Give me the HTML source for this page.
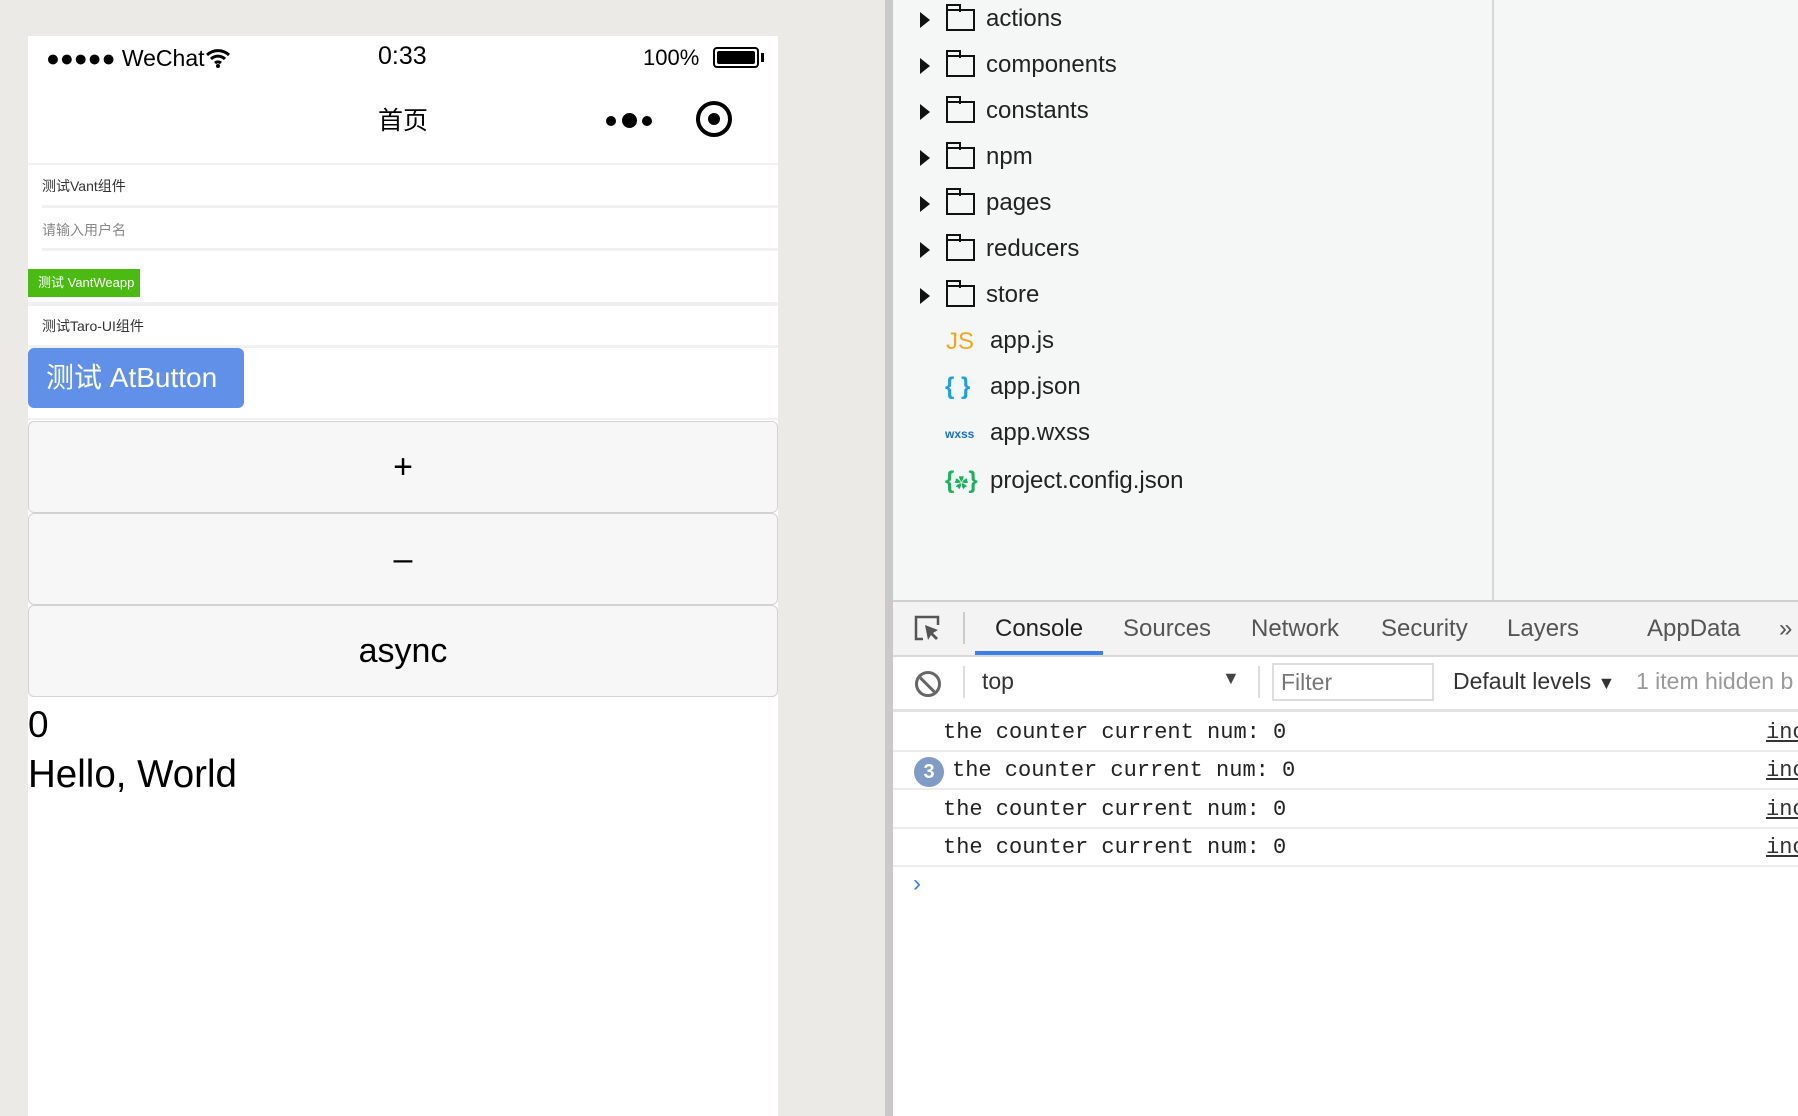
<!DOCTYPE html>
<html><head><meta charset="utf-8"><style>
*{margin:0;padding:0;box-sizing:border-box}
body{width:1798px;height:1116px;overflow:hidden;position:relative;background:#eceae6;font-family:"Liberation Sans","Noto Sans CJK SC",sans-serif;color:#000}
.a{position:absolute;white-space:nowrap}
.phone{position:absolute;left:28px;top:36px;width:750px;height:1080px;background:#fff}
.hr{position:absolute;left:0;right:0;height:3px;background:#f0f0f0}
.btn{position:absolute;left:0;width:750px;height:92px;background:#f7f7f7;border:1px solid #d2d2d2;border-radius:6px;text-align:center;line-height:90px;font-size:34px}
.right{position:absolute;left:893px;top:0;width:905px;height:1116px;background:#fff}
.tree{position:absolute;left:0;top:0;width:905px;height:600px;background:#f5f7f6}
.row{position:absolute;left:0;height:46px;font-size:24px;color:#222}
.tri{position:absolute;left:27px;top:6px;width:0;height:0;border-left:10px solid #111;border-top:8px solid transparent;border-bottom:8px solid transparent}
.fold{position:absolute;left:53px;top:3px;width:29px;height:22px;border:2px solid #111;border-top-width:2px}
.fold:before{content:"";position:absolute;left:-2px;top:-7px;width:11px;height:6px;border:2px solid #111;border-bottom:none}
.tab{position:absolute;top:615px;font-size:24px;color:#555}
.log{position:absolute;left:50px;font-family:"Liberation Mono",monospace;font-size:22px;color:#222}
.ln{position:absolute;left:0;right:0;height:2px;background:#ececec}
.inc{position:absolute;left:873px;font-family:"Liberation Mono",monospace;font-size:22px;text-decoration:underline;color:#333}
</style></head><body>
<div class="a" style="left:885px;top:0;width:8px;height:1116px;background:#c9c9c9"></div>
<div class="phone">
 <div class="a" style="left:18px;top:9px;font-size:23px">●●●●● WeChat<svg width="26" height="20" viewBox="0 0 26 20" style="vertical-align:-2px"><path d="M2 7a16 16 0 0 1 22 0M6 11a10 10 0 0 1 14 0M10 15a4.5 4.5 0 0 1 6 0" stroke="#000" stroke-width="3" fill="none"/><circle cx="13" cy="18" r="2" fill="#000"/></svg></div>
 <div class="a" style="left:350px;top:6px;font-size:25px">0:33</div>
 <div class="a" style="left:615px;top:9px;font-size:22px">100%</div>
 <div class="a" style="left:685px;top:11px;width:46px;height:21px;border:2px solid #000;border-radius:4px;padding:2px"><div style="width:100%;height:100%;background:#000;border-radius:2px"></div></div>
 <div class="a" style="left:733px;top:17px;width:3px;height:9px;background:#000"></div>
 <div class="a" style="left:350px;top:65px;font-size:25px">首页</div>
 <div class="a" style="left:578px;top:80px;width:10px;height:10px;border-radius:50%;background:#000"></div>
 <div class="a" style="left:594px;top:77px;width:15px;height:15px;border-radius:50%;background:#000"></div>
 <div class="a" style="left:614px;top:80px;width:10px;height:10px;border-radius:50%;background:#000"></div>
 <div class="a" style="left:668px;top:65px;width:36px;height:36px;border:4px solid #000;border-radius:50%"></div>
 <div class="a" style="left:680px;top:77px;width:12px;height:12px;background:#000;border-radius:50%"></div>
 <div class="hr" style="top:127px;height:2px"></div>
 <div class="a" style="left:14px;top:140px;font-size:14px;color:#333">测试Vant组件</div>
 <div class="hr" style="top:169px;left:14px"></div>
 <div class="a" style="left:14px;top:184px;font-size:14px;color:#888">请输入用户名</div>
 <div class="hr" style="top:212px;left:14px"></div>
 <div class="a" style="left:0;top:233px;width:112px;height:28px;background:#4bbb14;color:#fff;font-size:13px;line-height:28px;padding-left:10px">测试 VantWeapp</div>
 <div class="hr" style="top:266px;height:4px"></div>
 <div class="a" style="left:14px;top:280px;font-size:14px;color:#333">测试Taro-UI组件</div>
 <div class="hr" style="top:309px"></div>
 <div class="a" style="left:0;top:312px;width:216px;height:60px;background:#6190e8;border-radius:6px;color:#fff;font-size:28px;line-height:60px;padding-left:18px">测试 AtButton</div>
 <div class="hr" style="top:382px;height:2px"></div>
 <div class="btn" style="top:385px">+</div>
 <div class="btn" style="top:477px">–</div>
 <div class="btn" style="top:569px">async</div>
 <div class="a" style="left:0;top:668px;font-size:37px">0</div>
 <div class="a" style="left:0;top:717px;font-size:38.5px">Hello, World</div>
</div>
<div class="right">
 <div class="tree">
  <div class="a" style="left:599px;top:0;width:2px;height:600px;background:#d8d8d8"></div>
  <div class="row" style="top:6px"><div class="tri"></div><div class="fold"></div><span class="a" style="left:93px;top:-1px">actions</span></div>
  <div class="row" style="top:52px"><div class="tri"></div><div class="fold"></div><span class="a" style="left:93px;top:-1px">components</span></div>
  <div class="row" style="top:98px"><div class="tri"></div><div class="fold"></div><span class="a" style="left:93px;top:-1px">constants</span></div>
  <div class="row" style="top:144px"><div class="tri"></div><div class="fold"></div><span class="a" style="left:93px;top:-1px">npm</span></div>
  <div class="row" style="top:190px"><div class="tri"></div><div class="fold"></div><span class="a" style="left:93px;top:-1px">pages</span></div>
  <div class="row" style="top:236px"><div class="tri"></div><div class="fold"></div><span class="a" style="left:93px;top:-1px">reducers</span></div>
  <div class="row" style="top:282px"><div class="tri"></div><div class="fold"></div><span class="a" style="left:93px;top:-1px">store</span></div>
  <div class="row" style="top:328px"><span class="a" style="left:53px;top:0;color:#f5a623;font-size:24px">JS</span><span class="a" style="left:97px;top:-1px">app.js</span></div>
  <div class="row" style="top:374px"><span class="a" style="left:52px;top:-1px;color:#1aa1e6;font-size:24px;font-weight:bold">{ }</span><span class="a" style="left:97px;top:-1px">app.json</span></div>
  <div class="row" style="top:420px"><span class="a" style="left:52px;top:7px;color:#1a6fd0;font-size:12px;font-weight:bold">wxss</span><span class="a" style="left:97px;top:-1px">app.wxss</span></div>
  <div class="row" style="top:468px"><span class="a" style="left:52px;top:-1px;color:#1bb35a;font-size:24px;font-weight:bold">{<span style="font-size:14px">✿</span>}</span><span class="a" style="left:97px;top:-1px">project.config.json</span></div>
 </div>
 <div class="a" style="left:0;top:600px;width:905px;height:2px;background:#d0d0d0"></div>
 <div class="a" style="left:0;top:602px;width:905px;height:53px;background:#f3f3f3"></div>
 <svg class="a" style="left:20px;top:614px" width="30" height="30" viewBox="0 0 30 30"><path d="M10 25H3V3h22v8" stroke="#555" stroke-width="2.5" fill="none"/><path d="M12 11l3 15 3-5 5 5 2-2-5-5 5-3z" fill="#555"/></svg>
 <div class="a" style="left:70px;top:612px;width:2px;height:32px;background:#ccc"></div>
 <div class="tab" style="left:102px;color:#222">Console</div>
 <div class="tab" style="left:230px">Sources</div>
 <div class="tab" style="left:358px">Network</div>
 <div class="tab" style="left:488px">Security</div>
 <div class="tab" style="left:614px">Layers</div>
 <div class="tab" style="left:754px">AppData</div>
 <div class="tab" style="left:886px">»</div>
 <div class="a" style="left:82px;top:651px;width:128px;height:4px;background:#3b7ee8"></div>
 <div class="a" style="left:0;top:655px;width:905px;height:2px;background:#d8d8d8"></div>
 <div class="a" style="left:22px;top:671px;width:26px;height:26px;border:3px solid #666;border-radius:50%;overflow:hidden"><div style="position:absolute;left:8px;top:-4px;width:3px;height:30px;background:#666;transform:rotate(-45deg)"></div></div>
 <div class="a" style="left:70px;top:666px;width:2px;height:32px;background:#ddd"></div>
 <div class="a" style="left:89px;top:668px;font-size:23px;color:#333">top</div>
 <div class="a" style="left:329px;top:668px;font-size:18px;color:#444">▼</div>
 <div class="a" style="left:365px;top:666px;width:2px;height:32px;background:#ddd"></div>
 <div class="a" style="left:379px;top:663px;width:162px;height:38px;border:2px solid #ddd;background:#fff;font-size:23px;color:#777;padding:4px 7px">Filter</div>
 <div class="a" style="left:560px;top:668px;font-size:23px;color:#333">Default levels <span style="font-size:18px">▼</span></div>
 <div class="a" style="left:743px;top:668px;font-size:23px;color:#999">1 item hidden b</div>
 <div class="a" style="left:0;top:709px;width:905px;height:3px;background:#e2e2e2"></div>
 <div class="log" style="top:720px">the counter current num: 0</div>
 <div class="inc" style="top:720px">inc</div>
 <div class="ln" style="top:750px"></div>
 <div class="a" style="left:21px;top:757px;width:30px;height:30px;border-radius:50%;background:#7f9bc6;color:#fff;font-size:20px;font-weight:bold;text-align:center;line-height:30px">3</div>
 <div class="log" style="left:59px;top:758px">the counter current num: 0</div>
 <div class="inc" style="top:758px">inc</div>
 <div class="ln" style="top:788px"></div>
 <div class="log" style="top:797px">the counter current num: 0</div>
 <div class="inc" style="top:797px">inc</div>
 <div class="ln" style="top:827px"></div>
 <div class="log" style="top:835px">the counter current num: 0</div>
 <div class="inc" style="top:835px">inc</div>
 <div class="ln" style="top:865px"></div>
 <div class="a" style="left:20px;top:870px;font-size:24px;color:#3b7ee8">›</div>
</div>
</body></html>
